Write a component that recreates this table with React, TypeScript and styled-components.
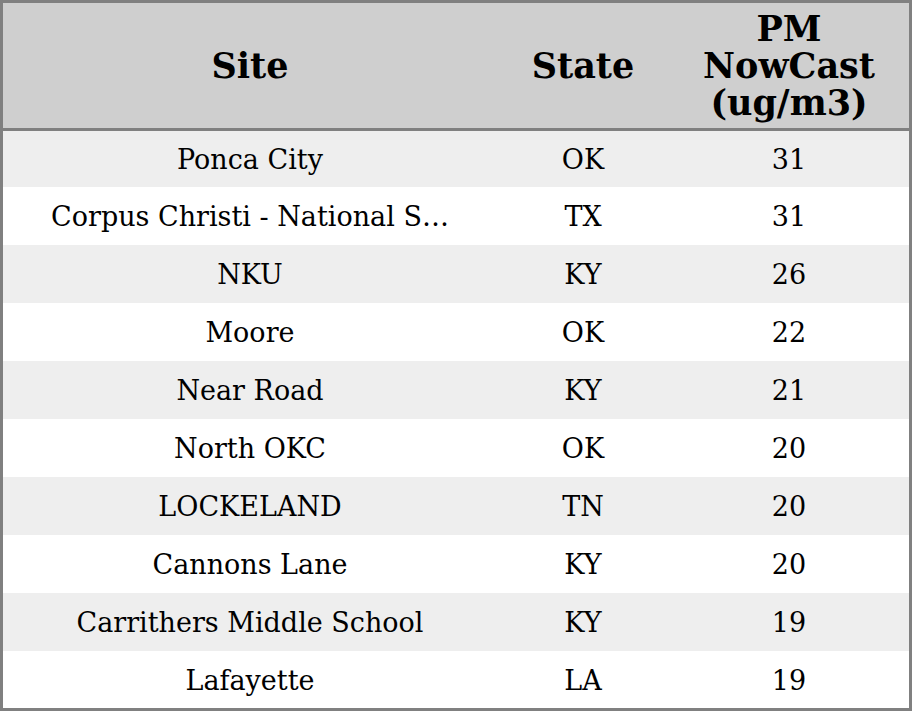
import React from 'react';
import styled, { createGlobalStyle } from 'styled-components';

const GlobalStyle = createGlobalStyle`
  html, body {
    margin: 0;
    padding: 0;
    background: #ffffff;
    overflow: hidden;
  }
`;

const Frame = styled.div`
  width: 912px;
  height: 711px;
  box-sizing: border-box;
  border: 3px solid #808080;
  overflow: hidden;
  background: #ffffff;
  font-family: 'DejaVu Serif', serif;
  color: #000000;
`;

const Table = styled.table`
  width: 100%;
  border-collapse: separate;
  border-spacing: 0;
  table-layout: fixed;
`;

const HeadCell = styled.th`
  height: 125px;
  padding: 0;
  background: #cfcfcf;
  border-bottom: 3px solid #808080;
  font-size: 35px;
  font-weight: bold;
  line-height: 37px;
  text-align: center;
  vertical-align: middle;
`;

const Row = styled.tr<{ $shaded: boolean; $first: boolean }>`
  height: ${p => (p.$first ? '56px' : '58px')};
  background: ${p => (p.$shaded ? '#eeeeee' : '#ffffff')};
`;

const Cell = styled.td`
  padding: 0;
  font-size: 27px;
  text-align: center;
  vertical-align: middle;
  white-space: nowrap;
  overflow: hidden;
`;

const rows = [
  { site: 'Ponca City', state: 'OK', pm: 31 },
  { site: 'Corpus Christi - National S…', state: 'TX', pm: 31 },
  { site: 'NKU', state: 'KY', pm: 26 },
  { site: 'Moore', state: 'OK', pm: 22 },
  { site: 'Near Road', state: 'KY', pm: 21 },
  { site: 'North OKC', state: 'OK', pm: 20 },
  { site: 'LOCKELAND', state: 'TN', pm: 20 },
  { site: 'Cannons Lane', state: 'KY', pm: 20 },
  { site: 'Carrithers Middle School', state: 'KY', pm: 19 },
  { site: 'Lafayette', state: 'LA', pm: 19 },
];

const App: React.FC = () => (
  <>
    <GlobalStyle />
    <Frame>
      <Table>
        <colgroup>
          <col style={{ width: 494 }} />
          <col style={{ width: 172 }} />
          <col />
        </colgroup>
        <thead>
          <tr>
            <HeadCell>Site</HeadCell>
            <HeadCell>State</HeadCell>
            <HeadCell>
              PM
              <br />
              NowCast
              <br />
              (ug/m3)
            </HeadCell>
          </tr>
        </thead>
        <tbody>
          {rows.map((r, i) => (
            <Row key={r.site} $shaded={i % 2 === 0} $first={i === 0}>
              <Cell>{r.site}</Cell>
              <Cell>{r.state}</Cell>
              <Cell>{r.pm}</Cell>
            </Row>
          ))}
        </tbody>
      </Table>
    </Frame>
  </>
);

export default App;
